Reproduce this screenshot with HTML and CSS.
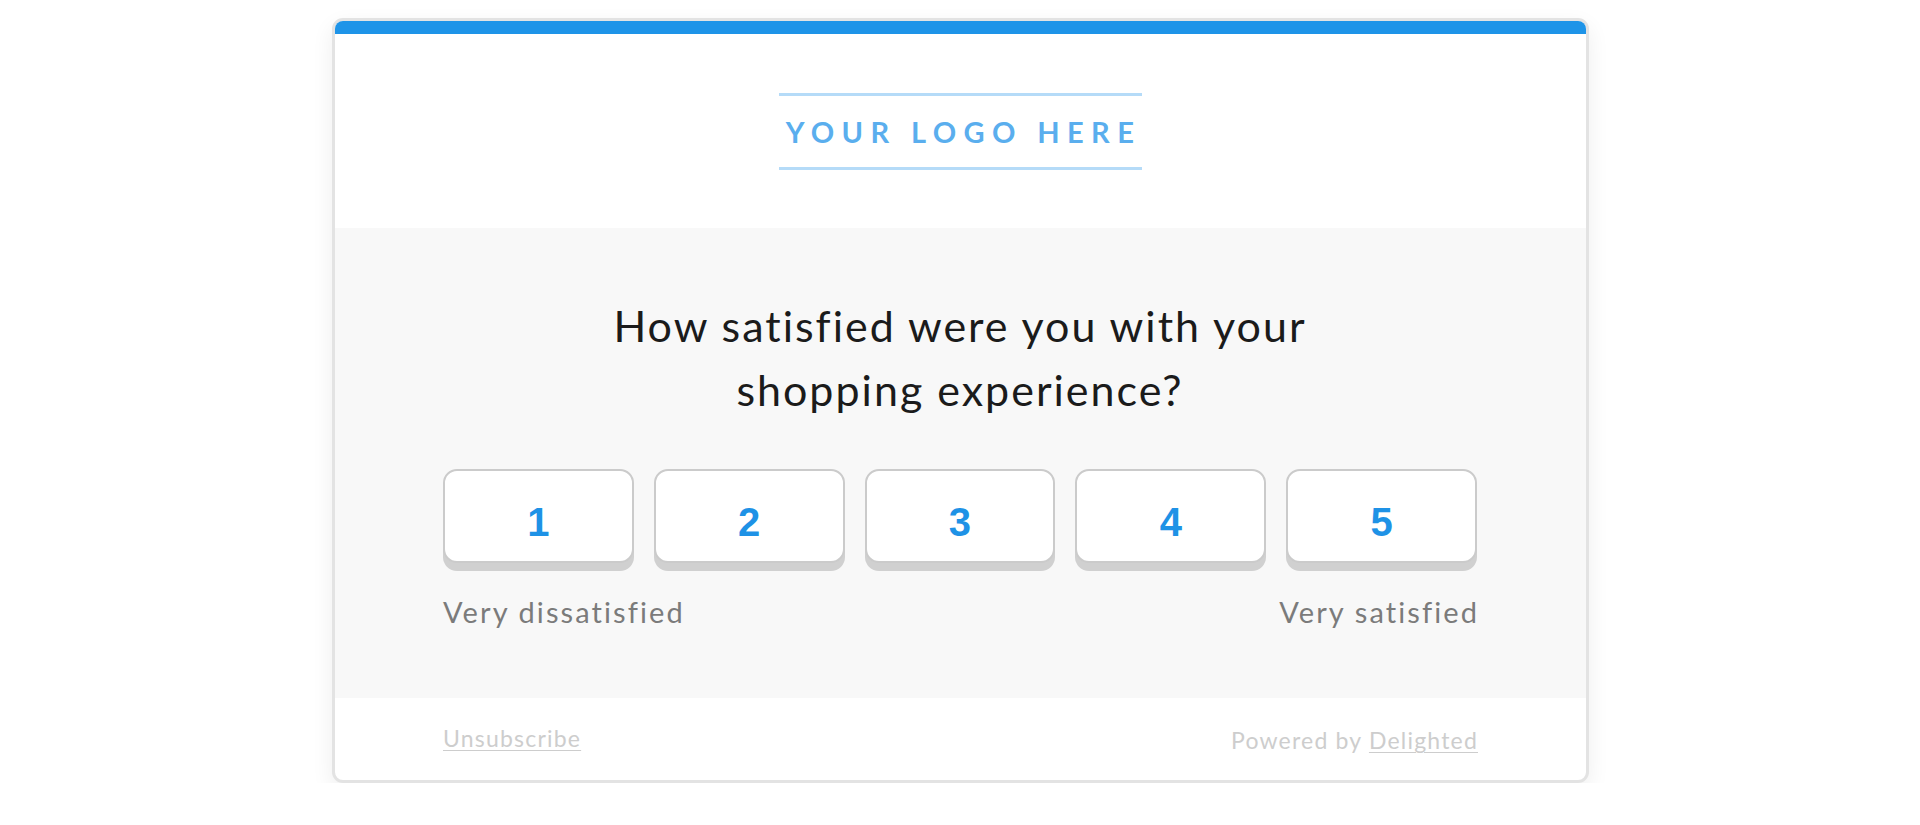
FILE: index.html
```html
<!DOCTYPE html>
<html lang="en">
<head>
<meta charset="utf-8">
<title>Survey</title>
<link rel="stylesheet" href="styles.css">
</head>
<body>
<div class="card">
  <div class="topbar"></div>
  <header class="header">
    <div class="logo">YOUR LOGO HERE</div>
  </header>
  <section class="survey">
    <h1 class="question">How satisfied were you with your<br>shopping experience?</h1>
    <div class="scale">
      <div class="choice">1</div>
      <div class="choice">2</div>
      <div class="choice">3</div>
      <div class="choice">4</div>
      <div class="choice">5</div>
    </div>
    <div class="labels">
      <span>Very dissatisfied</span>
      <span>Very satisfied</span>
    </div>
  </section>
  <footer class="footer">
    <a class="link" href="#">Unsubscribe</a>
    <span class="powered">Powered by <a class="link" href="#">Delighted</a></span>
  </footer>
</div>
</body>
</html>
```

FILE: styles.css
```css
html, body {
  margin: 0;
  padding: 0;
  background: #ffffff;
}
body {
  font-family: Lato, "Open Sans", "Liberation Sans", sans-serif;
  padding-top: 18px;
}
.card {
  width: 1257px;
  box-sizing: border-box;
  margin: 0 auto;
  border: 3px solid #e3e3e3;
  border-radius: 11px;
  background: #ffffff;
  overflow: hidden;
  box-shadow: 0 8px 22px rgba(0, 0, 0, 0.07);
}
.topbar {
  height: 13px;
  background: #1e94e8;
}
.header {
  display: flex;
  justify-content: center;
  padding: 59px 0 58px;
}
.logo {
  width: 363px;
  box-sizing: border-box;
  border-top: 3px solid #b5dbf8;
  border-bottom: 3px solid #b5dbf8;
  height: 77px;
  line-height: 71px;
  text-align: center;
  font-size: 29px;
  font-weight: 700;
  letter-spacing: 7.4px;
  padding-left: 7px;
  color: #5aaeee;
}
.survey {
  background: #f8f8f8;
  padding: 66px 0 68px;
  display: flex;
  flex-direction: column;
  align-items: center;
}
.question {
  margin: 0;
  font-size: 43px;
  font-weight: 400;
  line-height: 64px;
  letter-spacing: 2px;
  color: #1b1b1b;
  text-align: center;
}
.scale {
  margin-top: 47px;
  width: 1034px;
  display: grid;
  grid-template-columns: repeat(5, 1fr);
  gap: 20px;
}
.choice {
  height: 94px;
  box-sizing: border-box;
  border: 2px solid #cbcbcb;
  border-radius: 14px;
  background: #ffffff;
  box-shadow: 0 8px 0 #d0d0d0;
  display: flex;
  align-items: center;
  justify-content: center;
  padding-top: 12px;
  font-family: "Liberation Sans", Arial, sans-serif;
  font-weight: 700;
  font-size: 40px;
  color: #1e92e6;
}
.labels {
  margin-top: 31px;
  width: 1034px;
  display: flex;
  justify-content: space-between;
  font-size: 29px;
  line-height: 36px;
  letter-spacing: 2.1px;
  color: #7b7b7b;
}
.labels span:last-child {
  margin-right: -2px;
}
.footer {
  width: 1034px;
  margin: 0 auto;
  display: flex;
  justify-content: space-between;
  padding: 25px 0;
  font-size: 23px;
  line-height: 30px;
  letter-spacing: 1.2px;
  color: #cdcdcd;
}
.powered {
  padding-top: 2px;
  margin-right: -1px;
}
.link {
  color: #cdcdcd;
  text-decoration: underline;
  text-underline-offset: 3px;
  text-decoration-thickness: 1px;
}
```
